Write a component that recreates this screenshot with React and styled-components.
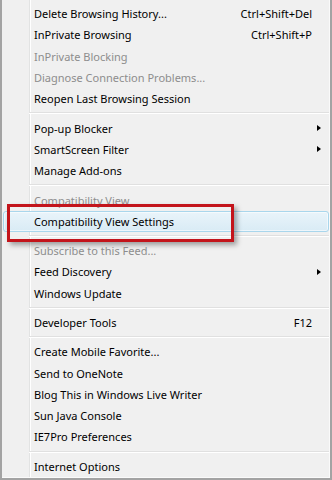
import React from 'react'
import styled, { createGlobalStyle, css } from 'styled-components'

const menuSections = [
  [
    { label: 'Delete Browsing History...', shortcut: 'Ctrl+Shift+Del' },
    { label: 'InPrivate Browsing', shortcut: 'Ctrl+Shift+P' },
    { label: 'InPrivate Blocking', disabled: true },
    { label: 'Diagnose Connection Problems...', disabled: true },
    { label: 'Reopen Last Browsing Session' },
  ],
  [
    { label: 'Pop-up Blocker', submenu: true },
    { label: 'SmartScreen Filter', submenu: true },
    { label: 'Manage Add-ons' },
  ],
  [
    { label: 'Compatibility View', disabled: true },
    { label: 'Compatibility View Settings', active: true, marked: true },
  ],
  [
    { label: 'Subscribe to this Feed...', disabled: true },
    { label: 'Feed Discovery', submenu: true },
    { label: 'Windows Update' },
  ],
  [
    { label: 'Developer Tools', shortcut: 'F12' },
  ],
  [
    { label: 'Create Mobile Favorite...' },
    { label: 'Send to OneNote' },
    { label: 'Blog This in Windows Live Writer' },
    { label: 'Sun Java Console' },
    { label: 'IE7Pro Preferences' },
  ],
  [
    { label: 'Internet Options' },
  ],
]

const ToolsMenu = () => (
  <>
    <GlobalStyle />
    <Menu>
      {menuSections.map((section, i) => (
        <React.Fragment key={i}>
          {i > 0 && <Separator />}
          {section.map((item) => (
            <Item key={item.label} $active={item.active} $disabled={item.disabled}>
              <Label>{item.label}</Label>
              {item.shortcut && <Shortcut>{item.shortcut}</Shortcut>}
              <ArrowCell>{item.submenu && <Arrow />}</ArrowCell>
              {item.marked && <Callout />}
            </Item>
          ))}
        </React.Fragment>
      ))}
    </Menu>
  </>
)

const GlobalStyle = createGlobalStyle`
  html, body {
    margin: 0;
    padding: 0;
    background: #fff;
  }
`

const Menu = styled.div`
  box-sizing: border-box;
  width: 332px;
  height: 480px;
  padding-top: 3px;
  border: 2px solid #a3a3a3;
  border-top: none;
  box-shadow: inset -1px -1px 0 #fafafa;
  background:
    linear-gradient(to right,
      transparent 27px,
      #e2e3e3 27px, #e2e3e3 28px,
      #ffffff 28px, #ffffff 29px,
      transparent 29px),
    #f0f0f0;
  font-family: "Noto Sans", "Open Sans", sans-serif;
  font-size: 11px;
  color: #000;
  overflow: hidden;
`

const Item = styled.div`
  position: relative;
  box-sizing: border-box;
  display: flex;
  align-items: center;
  height: 21.3px;
  padding-left: 32px;
  color: ${(p) => (p.$disabled ? '#8d8d8d' : '#000')};
  white-space: nowrap;

  ${(p) => p.$active && css`
    margin: 0 1px;
    padding-left: 30px;
    border: 1px solid #a9d6ec;
    border-radius: 3px;
    background: linear-gradient(#e9f4fa, #d9ebf5);
    box-shadow: inset 0 0 0 1px rgba(255, 255, 255, 0.55);
  `}
`

const Label = styled.span`
  flex: 1;
`

const Shortcut = styled.span`
  text-align: right;
`

const ArrowCell = styled.span`
  display: flex;
  align-items: center;
  width: 18px;
  height: 100%;
  padding-left: 5px;
  box-sizing: border-box;
`

const Arrow = styled.span`
  width: 0;
  height: 0;
  border-left: 4px solid #000;
  border-top: 3.5px solid transparent;
  border-bottom: 3.5px solid transparent;
`

const Separator = styled.div`
  height: 8px;
  margin-left: 27px;
  margin-right: 1px;
  background: linear-gradient(
    transparent 3px,
    #e0e0e0 3px, #e0e0e0 4px,
    #ffffff 4px, #ffffff 5px,
    transparent 5px
  );
`

const Callout = styled.span`
  position: absolute;
  top: -8px;
  left: 3px;
  width: 227px;
  height: 38px;
  box-sizing: border-box;
  border: 3px solid #c3141b;
  box-shadow: 3px 3px 5px rgba(0, 0, 0, 0.35);
  pointer-events: none;
`

export default ToolsMenu
